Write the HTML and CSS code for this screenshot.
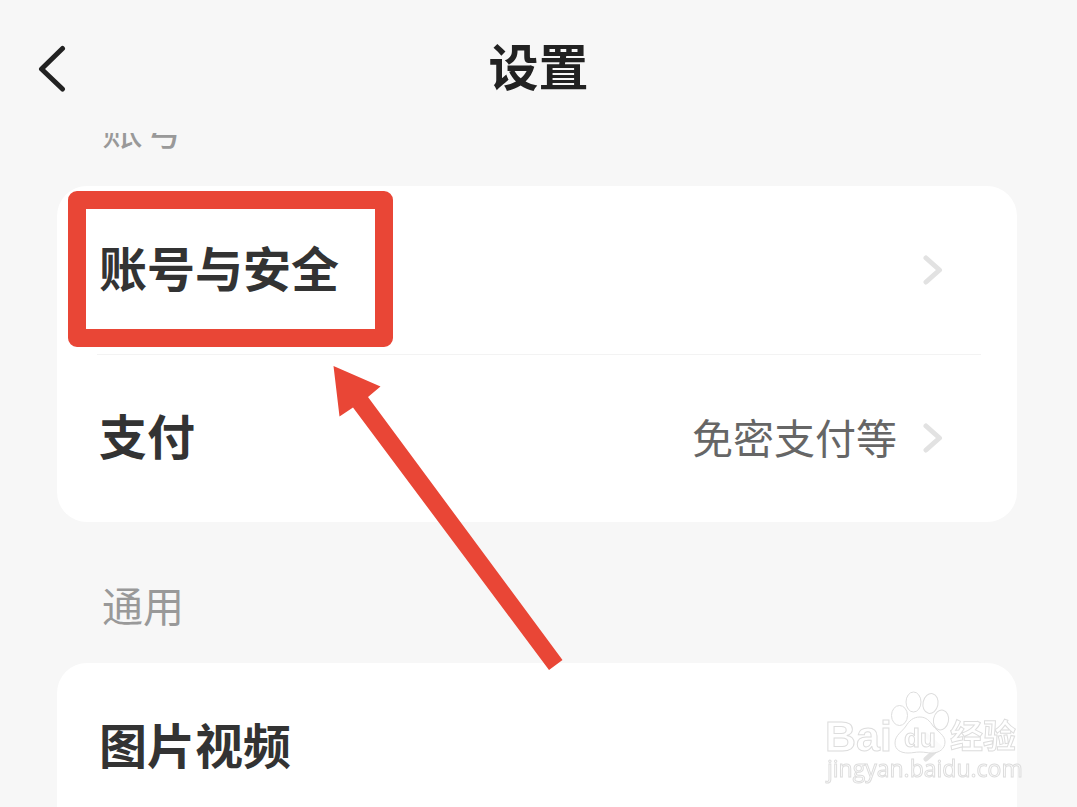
FILE: index.html
```
<!DOCTYPE html>
<html lang="zh-CN">

<head>
  <meta charset="UTF-8">
  <meta name="viewport" content="width=device-width, initial-scale=1">
  <title>设置</title>
  <link rel="stylesheet" href="styles.css">
</head>

<body>
  <header class="header">
    <button type="button" class="back" aria-label="返回">
      <svg width="28" height="48" viewBox="0 0 28 48">
        <path d="M24.500 3.500L3.500 24L24.500 44" />
      </svg>
    </button>
    <h1 class="title">设置</h1>
  </header>

  <main class="content">
    <h2 class="group-title">账号</h2>
    <ul class="card">
      <li class="item">
        <a href="#account" class="row">
          <span class="label">账号与安全</span>
          <svg class="chevron" width="20" height="30" viewBox="0 0 20 30">
            <path d="M3 3L16.500 15L3 27" />
          </svg>
        </a>
        <div class="highlight"></div>
      </li>
      <li class="item">
        <a href="#pay" class="row">
          <span class="label">支付</span>
          <span class="value">免密支付等</span>
          <svg class="chevron" width="20" height="30" viewBox="0 0 20 30">
            <path d="M3 3L16.500 15L3 27" />
          </svg>
        </a>
        <svg class="arrow" width="230" height="306" viewBox="0 0 230 306">
          <path d="M0.500 0L47.500 20.500L35 31L229.500 294L216 304L20 41.500L6.500 50.500Z" />
        </svg>
      </li>
    </ul>

    <h2 class="group-title">通用</h2>
    <ul class="card card-open">
      <li class="item">
        <a href="#media" class="row">
          <span class="label">图片视频</span>
          <svg class="chevron" width="20" height="30" viewBox="0 0 20 30">
            <path d="M3 3L16.500 15L3 27" />
          </svg>
        </a>
      </li>
    </ul>
  </main>

  <svg class="watermark" width="200" height="98" viewBox="0 0 200 98">
    <ellipse cx="74.500" cy="24.500" rx="8" ry="10" />
    <ellipse cx="88.500" cy="11" rx="7.500" ry="10" />
    <ellipse cx="105.500" cy="12.500" rx="7.500" ry="10" transform="rotate(12 105.500 12.500)" />
    <ellipse cx="116" cy="29" rx="7.500" ry="10" transform="rotate(12 116 29)" />
    <path class="pad" d="M95 26C88 26 84 30 81 35C77 41 70 44 70 52C70 59 76 62 83 62C88 62 90 61 95 61C100 61 102 62 107 62C114 62 120 58 120 51C120 44 113 41 108 35C105 30 101 26 95 26Z" />
    <text class="wm-logo" x="0" y="60">Bai</text>
    <text class="wm-du" x="79" y="56">du</text>
    <text class="wm-cn" x="125" y="57">经验</text>
    <text class="wm-url" x="2" y="86">jingyan.baidu.com</text>
  </svg>
</body>

</html>
```
FILE: styles.css
```
body {
  margin: 0;
  height: 100vh;
  overflow: hidden;
  background-color: #f7f7f7;
  color: #333;
  font-family: "Noto Sans CJK SC", sans-serif;
}

/* header stays above the scrolled list */
.header {
  position: relative;
  z-index: 2;
  display: grid;
  grid-template-columns: 104px 1fr 104px;
  align-items: center;
  height: 133px;
  box-sizing: border-box;
  background-color: #f7f7f7;
  padding-top: 4px;
}

.back {
  border: 0;
  padding: 0 0 0 38px;
  background: transparent;
  text-align: left;
  cursor: pointer;
}

.back svg {
  display: block;
  fill: none;
  stroke: #222;
  stroke-width: 5;
  stroke-linecap: round;
  stroke-linejoin: round;
}

.title {
  margin: 0;
  padding-bottom: 10px;
  font-size: 50px;
  line-height: 60px;
  font-weight: 700;
  text-align: center;
  color: #222;
}

.content {
  margin-top: -88px;
  padding: 0 60px 0 57px;
}

.group-title {
  margin: 0;
  padding: 52px 0 29px 45px;
  font-size: 41px;
  line-height: 60px;
  font-weight: 400;
  color: #999;
}

.card {
  list-style-type: none;
  margin: 0;
  padding: 0;
  border-radius: 30px;
  background-color: white;
}

.card-open {
  border-radius: 30px 30px 0 0;
}

.item {
  position: relative;
}

.item+.item::before {
  content: "";
  position: absolute;
  top: 0;
  left: 40px;
  right: 36px;
  height: 1px;
  background-color: #f3f3f3;
}

.row {
  display: flex;
  align-items: center;
  height: 168px;
  padding: 0 74px 0 42px;
  color: inherit;
  text-decoration: none;
}

.label {
  flex-grow: 1;
  padding-bottom: 8px;
  font-size: 48px;
  line-height: 60px;
  font-weight: 700;
}

.value {
  margin-right: 26px;
  padding-bottom: 4px;
  font-size: 41px;
  line-height: 60px;
  color: #666;
}

.chevron {
  fill: none;
  stroke: #e2e2e2;
  stroke-width: 5;
  stroke-linecap: round;
  stroke-linejoin: round;
}

.highlight {
  position: absolute;
  top: 5px;
  left: 11px;
  width: 325px;
  height: 156px;
  box-sizing: border-box;
  border: 18px solid #e94636;
  border-radius: 9px;
  pointer-events: none;
}

.arrow {
  position: absolute;
  z-index: 1;
  top: 12px;
  left: 276px;
  fill: #e94636;
  pointer-events: none;
}

.watermark {
  position: fixed;
  right: 52px;
  bottom: 18px;
  fill: rgba(255, 255, 255, 0.7);
  stroke: #ddd;
  stroke-width: 1;
  pointer-events: none;
}

.watermark .pad {
  fill: rgba(255, 255, 255, 0.85);
}

.watermark text {
  font-family: "Liberation Sans", "Noto Sans CJK SC", sans-serif;
  font-weight: 700;
}

.watermark .wm-logo {
  font-size: 43px;
}

.watermark .wm-du {
  font-size: 26px;
}

.watermark .wm-cn {
  font-family: "Noto Sans CJK SC", sans-serif;
  font-size: 33px;
}

.watermark .wm-url {
  font-family: "Open Sans", sans-serif;
  font-size: 23px;
  font-weight: 400;
}
```
